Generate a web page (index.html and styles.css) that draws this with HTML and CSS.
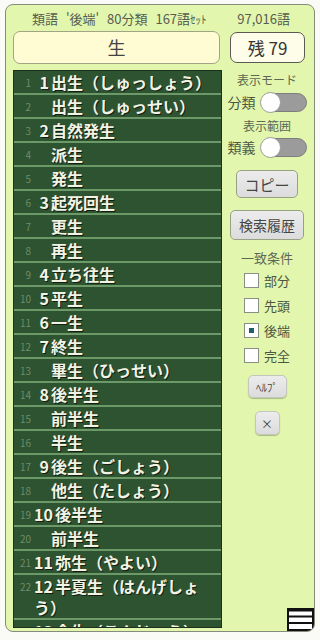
FILE: index.html
```html
<!DOCTYPE html>
<html lang="ja">
<head>
  <meta charset="UTF-8">
  <meta name="viewport" content="width=device-width, initial-scale=1.0">
  <title>類語検索</title>
  <link rel="stylesheet" href="styles.css">
</head>
<body>

<div class="card">
  <div class="head">
    <span>類語 '後端' 80分類 167語<small>ｾｯﾄ</small></span>
    <span>97,016語</span>
  </div>

  <div class="top">
    <div class="query">生</div>
    <div class="rest">残 79</div>
  </div>

  <div class="main">
    <div class="list">
      <div class="row"><span class="num">1</span><span class="txt"><span class="grp">1</span>出生（しゅっしょう）</span></div>
      <div class="row"><span class="num">2</span><span class="txt"><span class="grp"></span>出生（しゅっせい）</span></div>
      <div class="row"><span class="num">3</span><span class="txt"><span class="grp">2</span>自然発生</span></div>
      <div class="row"><span class="num">4</span><span class="txt"><span class="grp"></span>派生</span></div>
      <div class="row"><span class="num">5</span><span class="txt"><span class="grp"></span>発生</span></div>
      <div class="row"><span class="num">6</span><span class="txt"><span class="grp">3</span>起死回生</span></div>
      <div class="row"><span class="num">7</span><span class="txt"><span class="grp"></span>更生</span></div>
      <div class="row"><span class="num">8</span><span class="txt"><span class="grp"></span>再生</span></div>
      <div class="row"><span class="num">9</span><span class="txt"><span class="grp">4</span>立ち往生</span></div>
      <div class="row"><span class="num">10</span><span class="txt"><span class="grp">5</span>平生</span></div>
      <div class="row"><span class="num">11</span><span class="txt"><span class="grp">6</span>一生</span></div>
      <div class="row"><span class="num">12</span><span class="txt"><span class="grp">7</span>終生</span></div>
      <div class="row"><span class="num">13</span><span class="txt"><span class="grp"></span>畢生（ひっせい）</span></div>
      <div class="row"><span class="num">14</span><span class="txt"><span class="grp">8</span>後半生</span></div>
      <div class="row"><span class="num">15</span><span class="txt"><span class="grp"></span>前半生</span></div>
      <div class="row"><span class="num">16</span><span class="txt"><span class="grp"></span>半生</span></div>
      <div class="row"><span class="num">17</span><span class="txt"><span class="grp">9</span>後生（ごしょう）</span></div>
      <div class="row"><span class="num">18</span><span class="txt"><span class="grp"></span>他生（たしょう）</span></div>
      <div class="row"><span class="num">19</span><span class="txt"><span class="grp">10</span>後半生</span></div>
      <div class="row"><span class="num">20</span><span class="txt"><span class="grp"></span>前半生</span></div>
      <div class="row"><span class="num">21</span><span class="txt"><span class="grp">11</span>弥生（やよい）</span></div>
      <div class="row"><span class="num">22</span><span class="txt"><span class="grp">12</span>半夏生（はんげしょう）</span></div>
      <div class="row"><span class="num">23</span><span class="txt"><span class="grp">13</span>今生（こんじょう）</span></div>
    </div>

    <div class="side">
      <div class="cap">表示モード</div>
      <div class="sw"><span>分類</span><span class="toggle"></span></div>
      <div class="cap cap2">表示範囲</div>
      <div class="sw sw2"><span>類義</span><span class="toggle"></span></div>

      <button class="btn copy">コピー</button>
      <button class="btn hist">検索履歴</button>

      <div class="cap cap3">一致条件</div>
      <label class="chk first"><span class="box"></span>部分</label>
      <label class="chk"><span class="box"></span>先頭</label>
      <label class="chk"><span class="box on"></span>後端</label>
      <label class="chk"><span class="box"></span>完全</label>

      <button class="btn help">ﾍﾙﾌﾟ</button>
      <button class="btn close">×</button>
    </div>
  </div>

  <svg class="menu" width="27" height="23" viewBox="0 0 27 23">
    <rect x="1" y="1" width="25" height="21" fill="#fff" stroke="#111" stroke-width="2"/>
    <rect x="1" y="1" width="25" height="2.5" fill="#111"/>
    <line x1="1" y1="8.5" x2="26" y2="8.5" stroke="#111" stroke-width="2"/>
    <line x1="1" y1="15" x2="26" y2="15" stroke="#111" stroke-width="2"/>
  </svg>
</div>

</body>
</html>
```

FILE: styles.css
```css
body {
  margin: 0;
  background-color: #fafbf7;
  font-family: "Noto Sans CJK JP", "Noto Sans", sans-serif;
}
.card {
  position: relative;
  box-sizing: border-box;
  width: 310px;
  height: 628px;
  margin: 4px 5px 0;
  padding: 0 6px 3px 7px;
  background-color: #e2f7ad;
  border: 1px solid #868c7c;
  border-radius: 8px;
  display: flex;
  flex-direction: column;
  overflow: hidden;
}
.head {
  height: 26px;
  display: flex;
  justify-content: space-between;
  align-items: center;
  padding: 0 18px 0 19px;
  font-size: 13px;
  color: #585c52;
  word-spacing: 5px;
}
.head small {
  font-size: 11px;
  word-spacing: 0;
}
.top {
  display: flex;
  gap: 10px;
  height: 33px;
}
.query {
  box-sizing: border-box;
  width: 207px;
  height: 33px;
  line-height: 31px;
  text-align: center;
  font-size: 18px;
  color: #444;
  background-color: #fffbd3;
  border: 1px solid #a2a585;
  border-radius: 7px;
}
.rest {
  box-sizing: border-box;
  width: 75px;
  height: 31px;
  margin-top: 1px;
  line-height: 29px;
  text-align: center;
  font-size: 17px;
  color: #333;
  background-color: #fdfde9;
  border: 1px solid #5a5a52;
  border-radius: 7px;
}
.main {
  flex: 1;
  min-height: 0;
  display: flex;
  margin-top: 6px;
}
.list {
  box-sizing: border-box;
  width: 209px;
  flex: none;
  background-color: #2e5331;
  border: 1px solid #1b311d;
  overflow: hidden;
}
.row {
  display: flex;
  align-items: flex-start;
  padding-top: 1px;
  line-height: 21px;
  border-bottom: 2px solid #6c9968;
}
.num {
  flex: none;
  box-sizing: border-box;
  width: 20px;
  padding-right: 3px;
  text-align: right;
  font-size: 10px;
  color: #6f8c6b;
}
.txt {
  flex: 1;
  font-size: 16px;
  font-weight: bold;
  color: #f2f3e4;
  text-shadow: 1px 1px 0 #0f1f10;
}
.grp {
  display: inline-block;
  min-width: 15px;
  margin-right: 2px;
  text-align: right;
}
.side {
  flex: 1;
  display: flex;
  flex-direction: column;
  align-items: center;
  padding-left: 4px;
  font-size: 13px;
  color: #4c5642;
}
.cap {
  margin-top: 2px;
  font-size: 12px;
  line-height: 16px;
  color: #5e6754;
}
.cap2 {
  margin-top: 6px;
}
.cap3 {
  margin-top: 9px;
  font-size: 13px;
  line-height: 18px;
}
.sw {
  display: flex;
  align-items: center;
  gap: 5px;
  height: 20px;
  margin-top: 4px;
  font-size: 14px;
}
.sw2 {
  margin-top: 3px;
}
.toggle {
  position: relative;
  box-sizing: border-box;
  width: 46px;
  height: 19px;
  background-color: #9b9b9b;
  border: 1px solid #7d7d7d;
  border-radius: 10px;
}
.toggle::before {
  content: "";
  position: absolute;
  left: -2px;
  top: -2px;
  width: 21px;
  height: 21px;
  box-sizing: border-box;
  background-color: #fff;
  border: 1px solid #9a9a9a;
  border-radius: 50%;
}
.btn {
  box-sizing: border-box;
  padding: 0;
  font-family: inherit;
  color: #454545;
  background: linear-gradient(#ececec, #dcdcdc);
  border: 1.5px solid #98a184;
  border-radius: 5px;
}
.copy {
  width: 62px;
  height: 28px;
  margin-top: 13px;
  font-size: 15px;
}
.hist {
  width: 74px;
  height: 30px;
  margin-top: 12px;
  font-size: 14px;
}
.chk {
  display: flex;
  align-items: center;
  gap: 5px;
  height: 20px;
  margin-top: 5px;
  font-size: 13px;
}
.chk.first {
  margin-top: 3px;
}
.box {
  position: relative;
  box-sizing: border-box;
  width: 15px;
  height: 15px;
  background-color: #fff;
  border: 1px solid #8a8f84;
}
.box.on::after {
  content: "";
  position: absolute;
  left: 4px;
  top: 4px;
  width: 5px;
  height: 5px;
  background-color: #215e6c;
}
.help {
  width: 39px;
  height: 23px;
  margin-top: 10px;
  font-size: 11px;
  border: 1px solid #c4c7bd;
  box-shadow: 0 1px 1px rgba(0, 0, 0, 0.25);
}
.close {
  width: 25px;
  height: 24px;
  margin-top: 13px;
  font-size: 12px;
  border: 1px solid #c4c7bd;
  box-shadow: 0 1px 1px rgba(0, 0, 0, 0.25);
}
.menu {
  position: absolute;
  right: 0;
  bottom: 0;
}
```
